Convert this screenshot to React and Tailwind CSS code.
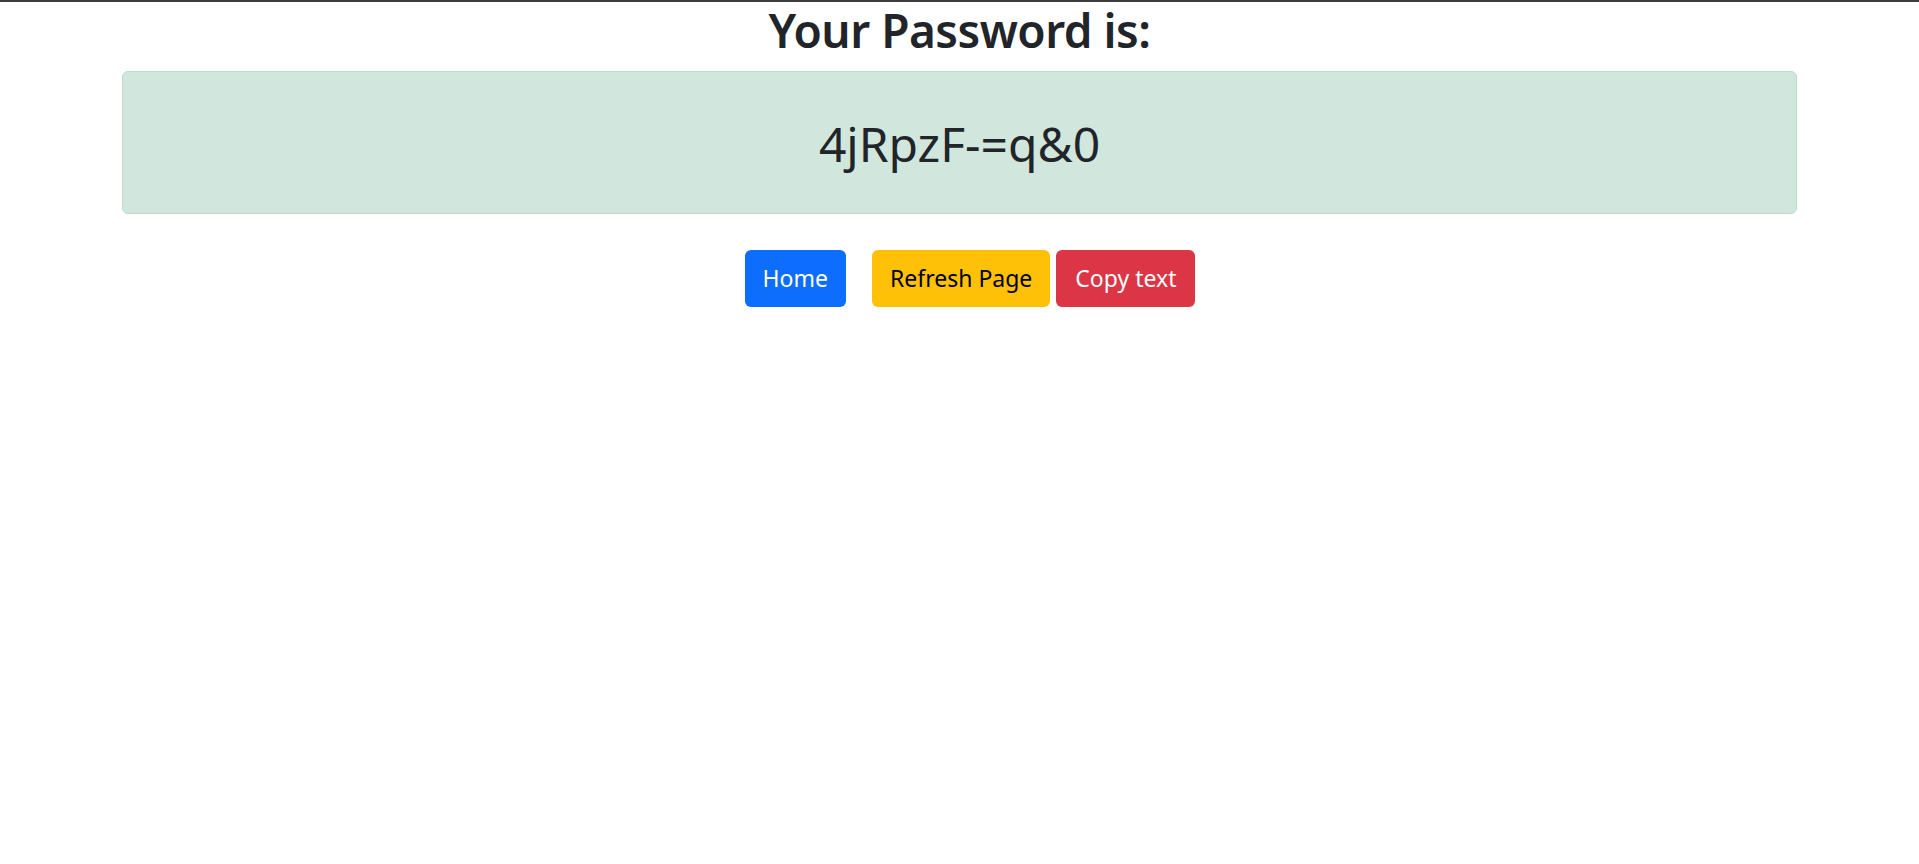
import React from 'react';

export default function App() {
  const password = '4jRpzF-=q&0';

  return (
    <div className="min-h-screen bg-white border-t-2 border-[#3c3c3c] font-['Noto_Sans',sans-serif] text-[#212529]">
      <h1 className="text-center text-[46px] leading-[57px] font-semibold tracking-[-0.5px] mb-[12px]">
        Your Password is:
      </h1>
      <div className="mx-[122px] h-[143px] flex items-center justify-center bg-[#d1e7dd] border border-[#badbcc] rounded-[6px]">
        <div className="text-[48px] leading-none font-normal pt-[2px]">{password}</div>
      </div>
      <div className="flex justify-center pl-[21px] mt-[36px]">
        <button className="h-[57px] px-[18px] rounded-[6px] bg-[#0d6efd] text-white text-[23px]">Home</button>
        <button className="h-[57px] px-[18px] ml-[26px] rounded-[6px] bg-[#ffc107] text-black text-[23px]">Refresh Page</button>
        <button className="h-[57px] px-[19px] ml-[6px] rounded-[6px] bg-[#dc3545] text-white text-[23px]">Copy text</button>
      </div>
    </div>
  );
}
